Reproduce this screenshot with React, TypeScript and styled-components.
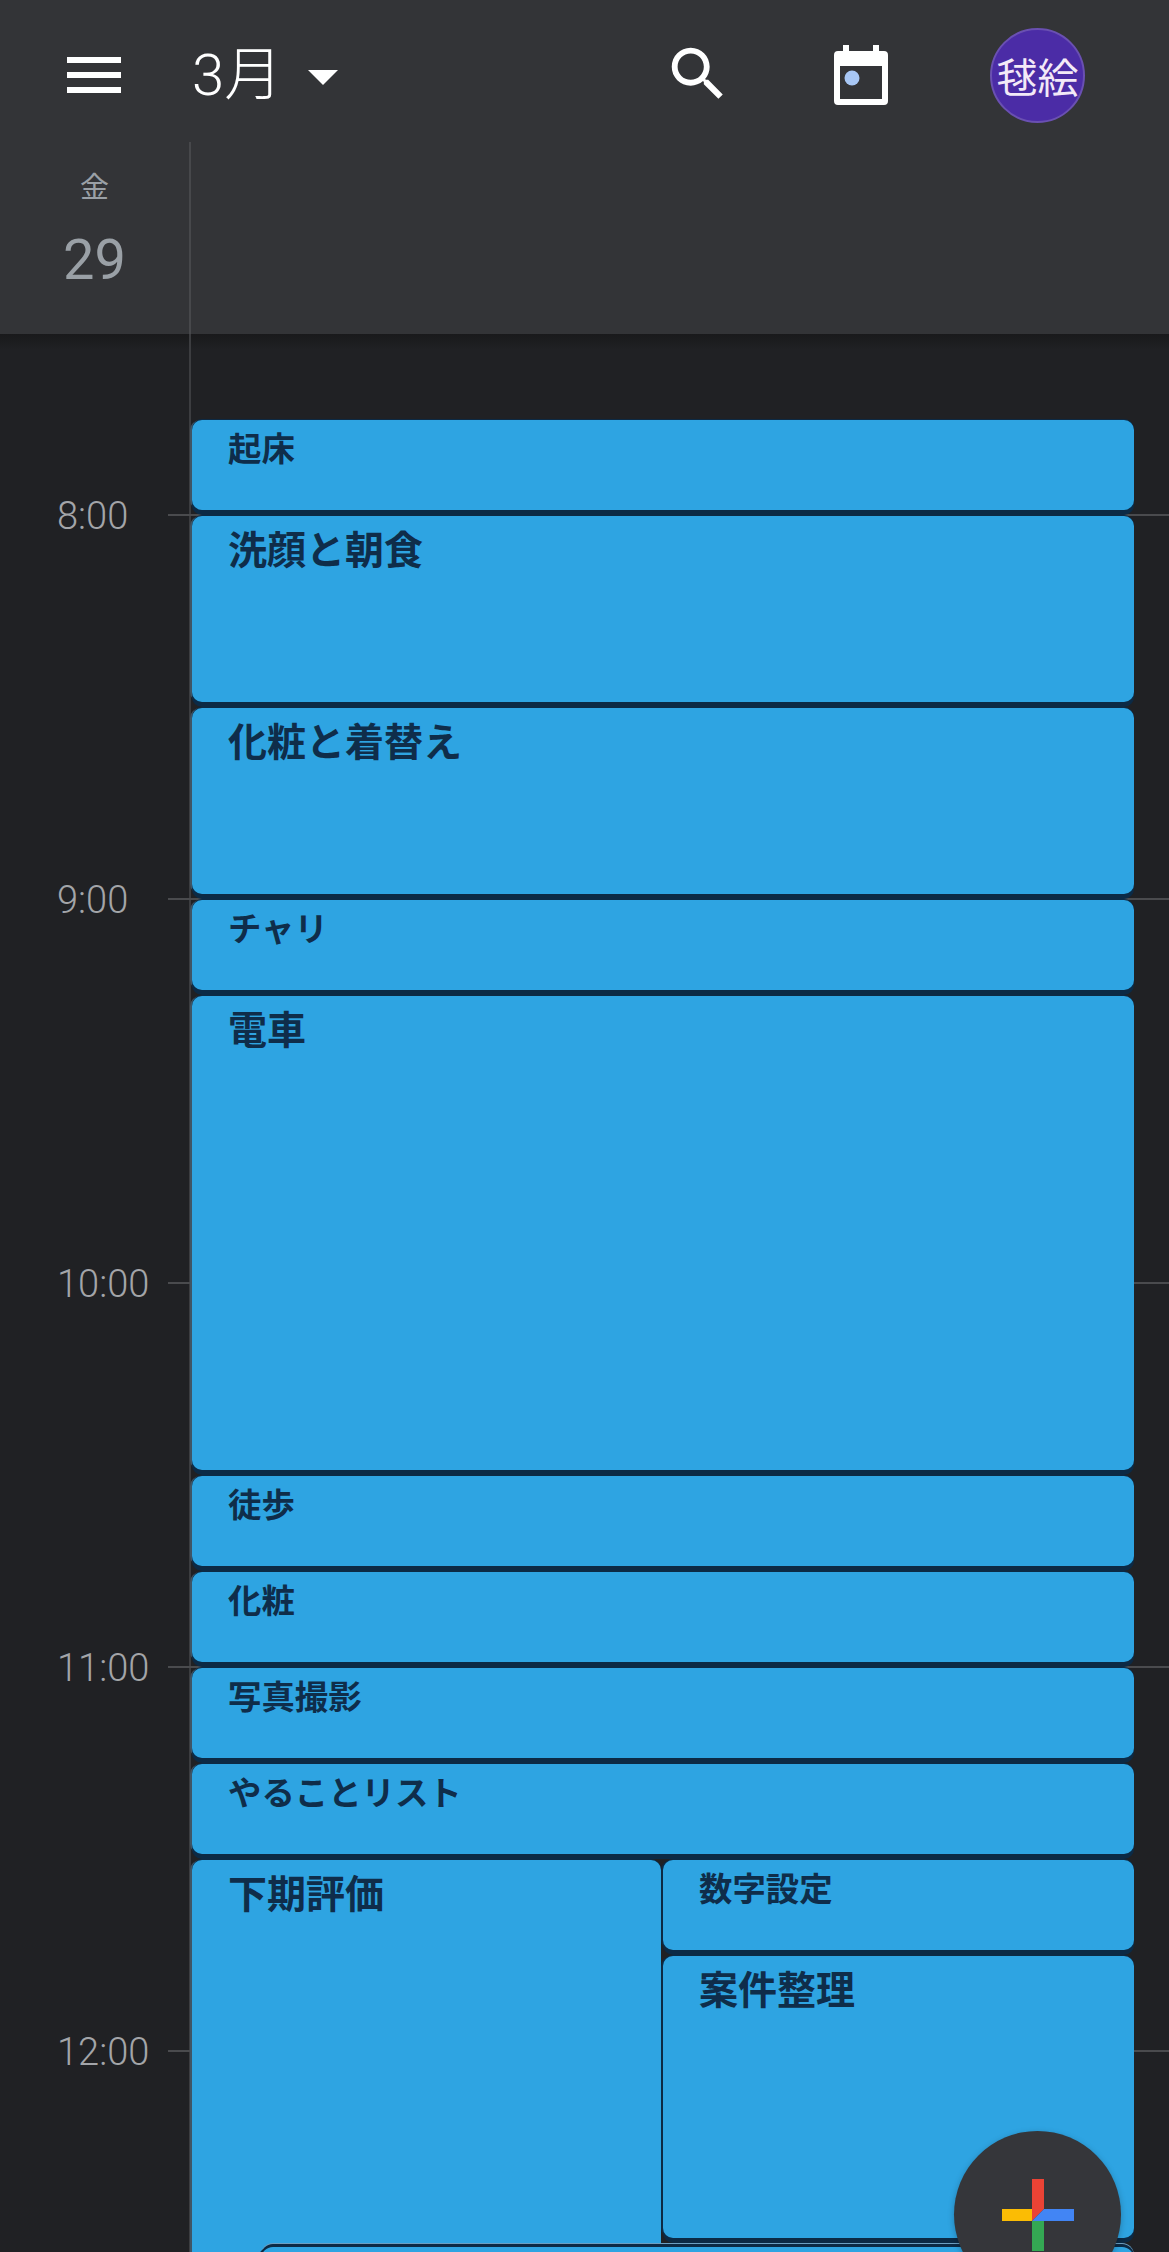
import React from "react";
import styled, { createGlobalStyle } from "styled-components";

const CJK = `"Noto Sans CJK JP", "Noto Sans", sans-serif`;
const NAVY = "#0c2a45";

const Global = createGlobalStyle`
  html, body { margin: 0; padding: 0; background: #202124; }
`;

const Page = styled.div`
  position: relative;
  width: 1169px;
  height: 2252px;
  overflow: hidden;
  background: #202124;
  font-family: Roboto, ${CJK};
`;

const Header = styled.header`
  background: #333437;
  height: 334px;
`;

const Toolbar = styled.div`
  display: flex;
  align-items: center;
  height: 134px;
  padding-top: 8px;
  color: #fff;
`;

const MenuIcon = styled.svg`
  width: 54px;
  height: 36px;
  margin-left: 67px;
  fill: #fff;
`;

const MonthButton = styled.div`
  display: flex;
  align-items: center;
  margin-left: 71px;
  font-size: 58px;
  font-weight: 300;
  line-height: 60px;
  font-family: Roboto, ${CJK};
`;

const Caret = styled.span`
  width: 0;
  height: 0;
  margin-left: 26px;
  margin-top: 4px;
  border-left: 15px solid transparent;
  border-right: 15px solid transparent;
  border-top: 15px solid #fff;
`;

const SearchIcon = styled.svg`
  width: 70px;
  height: 70px;
  margin-left: auto;
  margin-top: -2px;
  fill: #fff;
`;

const CalendarIcon = styled.svg`
  width: 54px;
  height: 60px;
  margin-left: 101px;
`;

const Avatar = styled.div`
  box-sizing: border-box;
  width: 95px;
  height: 95px;
  margin-left: 102px;
  margin-right: 84px;
  border-radius: 50%;
  background: #4b2ca6;
  border: 2px solid #6a50b2;
  color: #f3e9f7;
  display: flex;
  align-items: center;
  justify-content: center;
  font-family: ${CJK};
  font-size: 41px;
  line-height: 1;
  white-space: nowrap;
`;

const DayRow = styled.div`
  display: flex;
  height: 192px;
`;

const DayCell = styled.div`
  box-sizing: border-box;
  width: 191px;
  border-right: 2px solid #47484b;
  display: flex;
  flex-direction: column;
  align-items: center;
  color: #9aa0a6;
`;

const Weekday = styled.div`
  font-family: ${CJK};
  font-size: 29px;
  line-height: 40px;
  margin-top: 23px;
`;

const DayNumber = styled.div`
  font-size: 56px;
  font-weight: 400;
  line-height: 66px;
  margin-top: 22px;
`;

const Schedule = styled.main`
  display: grid;
  grid-template-columns: 168px 24px 469px 2px 471px 1fr;
  grid-template-rows: repeat(22, 96px);
  padding-top: 85px;
  background:
    linear-gradient(#3c3d40, #3c3d40) 189px 0 / 2px 100% no-repeat,
    linear-gradient(#19191b, #202124) 0 0 / 100% 16px no-repeat;
`;

const TimeLabel = styled.div<{ $row: number }>`
  grid-column: 1;
  grid-row: ${(p) => p.$row} / span 2;
  align-self: center;
  padding-left: 57px;
  padding-top: 2px;
  color: #a3a5a9;
  font-size: 38px;
  font-weight: 300;
  line-height: 44px;
`;

const HourLine = styled.div<{ $row: number }>`
  grid-column: 2 / -1;
  grid-row: ${(p) => p.$row};
  height: 2px;
  margin-top: -1px;
  background: #4a4b4e;
`;

const EventCard = styled.div<{ $row: number; $span: number; $col: string; $edge: string }>`
  grid-column: ${(p) => p.$col};
  grid-row: ${(p) => p.$row} / span ${(p) => p.$span};
  margin: 1px 0 5px;
  background: #2ea4e2;
  border-radius: 10px;
  box-shadow: 0 5px 0 ${NAVY}, 0 -1px 0 ${NAVY}, -2px 0 0 ${(p) => p.$edge};
  padding-left: 36px;
  color: #0f2d4a;
  font-family: ${CJK};
  font-weight: 700;
  overflow: hidden;
`;

const NestedCard = styled(EventCard)`
  margin: 4px 0 0 69px;
  border-radius: 12px;
  box-shadow: 0 -3px 0 ${NAVY}, -3px 0 0 ${NAVY}, 0 -4px 0 #6c9fc2;
`;

const Title = styled.div<{ $big?: boolean }>`
  font-size: ${(p) => (p.$big ? 39 : 33.4)}px;
  line-height: ${(p) => (p.$big ? 56 : 48)}px;
  margin-top: ${(p) => (p.$big ? 3 : 3)}px;
  white-space: nowrap;
`;

const Fab = styled.div`
  position: absolute;
  left: 954px;
  top: 2131px;
  width: 167px;
  height: 167px;
  border-radius: 50%;
  background: #35363a;
  display: flex;
  align-items: center;
  justify-content: center;
  box-shadow: 0 2px 6px rgba(0, 0, 0, 0.25);
`;

const PlusIcon = styled.svg`
  width: 72px;
  height: 72px;
`;

const LEFT = "#3f5566";
const FULL = "3 / 6";

type Ev = { title: string; row: number; span: number; col?: string; edge?: string; big?: boolean };

const events: Ev[] = [
  { title: "起床", row: 1, span: 1 },
  { title: "洗顔と朝食", row: 2, span: 2, big: true },
  { title: "化粧と着替え", row: 4, span: 2, big: true },
  { title: "チャリ", row: 6, span: 1 },
  { title: "電車", row: 7, span: 5, big: true },
  { title: "徒歩", row: 12, span: 1 },
  { title: "化粧", row: 13, span: 1 },
  { title: "写真撮影", row: 14, span: 1 },
  { title: "やることリスト", row: 15, span: 1 },
  { title: "下期評価", row: 16, span: 7, col: "3 / 4", big: true },
  { title: "数字設定", row: 16, span: 1, col: "5 / 6", edge: NAVY },
  { title: "案件整理", row: 17, span: 3, col: "5 / 6", edge: NAVY, big: true },
];

const hours = [
  { label: "8:00", row: 2 },
  { label: "9:00", row: 6 },
  { label: "10:00", row: 10 },
  { label: "11:00", row: 14 },
  { label: "12:00", row: 18 },
];

export default function App() {
  return (
    <Page>
      <Global />
      <Header>
        <Toolbar>
          <MenuIcon viewBox="0 0 54 36">
            <rect x="0" y="0" width="54" height="6" />
            <rect x="0" y="15" width="54" height="6" />
            <rect x="0" y="30" width="54" height="6" />
          </MenuIcon>
          <MonthButton>
            3月
            <Caret />
          </MonthButton>
          <SearchIcon viewBox="0 0 24 24">
            <path d="M15.5 14h-.79l-.28-.27C15.41 12.59 16 11.11 16 9.5 16 5.91 13.09 3 9.5 3S3 5.91 3 9.5 5.91 16 9.5 16c1.61 0 3.09-.59 4.23-1.57l.27.28v.79l5 4.99L20.49 19l-4.99-5zm-6 0C7.01 14 5 11.99 5 9.5S7.01 5 9.5 5 14 7.01 14 9.5 11.99 14 9.5 14z" />
          </SearchIcon>
          <CalendarIcon viewBox="0 0 54 60">
            <rect x="9" y="0" width="6" height="10" fill="#fff" />
            <rect x="39" y="0" width="6" height="10" fill="#fff" />
            <path
              fillRule="evenodd"
              fill="#fff"
              d="M4 6h46a4 4 0 0 1 4 4v46a4 4 0 0 1-4 4H4a4 4 0 0 1-4-4V10a4 4 0 0 1 4-4zM6 21v33h42V21z"
            />
            <circle cx="18" cy="33" r="7.5" fill="#a8c7f5" />
          </CalendarIcon>
          <Avatar>毬絵</Avatar>
        </Toolbar>
        <DayRow>
          <DayCell>
            <Weekday>金</Weekday>
            <DayNumber>29</DayNumber>
          </DayCell>
        </DayRow>
      </Header>
      <Schedule>
        {hours.map((h) => (
          <HourLine key={h.label} $row={h.row} />
        ))}
        {hours.map((h) => (
          <TimeLabel key={h.label} $row={h.row - 1}>
            {h.label}
          </TimeLabel>
        ))}
        {events.map((e) => (
          <EventCard key={e.title} $row={e.row} $span={e.span} $col={e.col ?? FULL} $edge={e.edge ?? LEFT}>
            <Title $big={e.big}>{e.title}</Title>
          </EventCard>
        ))}
        <NestedCard $row={20} $span={3} $col={FULL} $edge={NAVY} />
      </Schedule>
      <Fab>
        <PlusIcon viewBox="0 0 72 72">
          <polygon points="30,0 42,0 42,30 30,42" fill="#ea4335" />
          <polygon points="0,30 30,30 30,42 0,42" fill="#fbbc04" />
          <polygon points="42,30 72,30 72,42 30,42" fill="#4285f4" />
          <polygon points="30,42 42,42 42,72 30,72" fill="#34a853" />
        </PlusIcon>
      </Fab>
    </Page>
  );
}
